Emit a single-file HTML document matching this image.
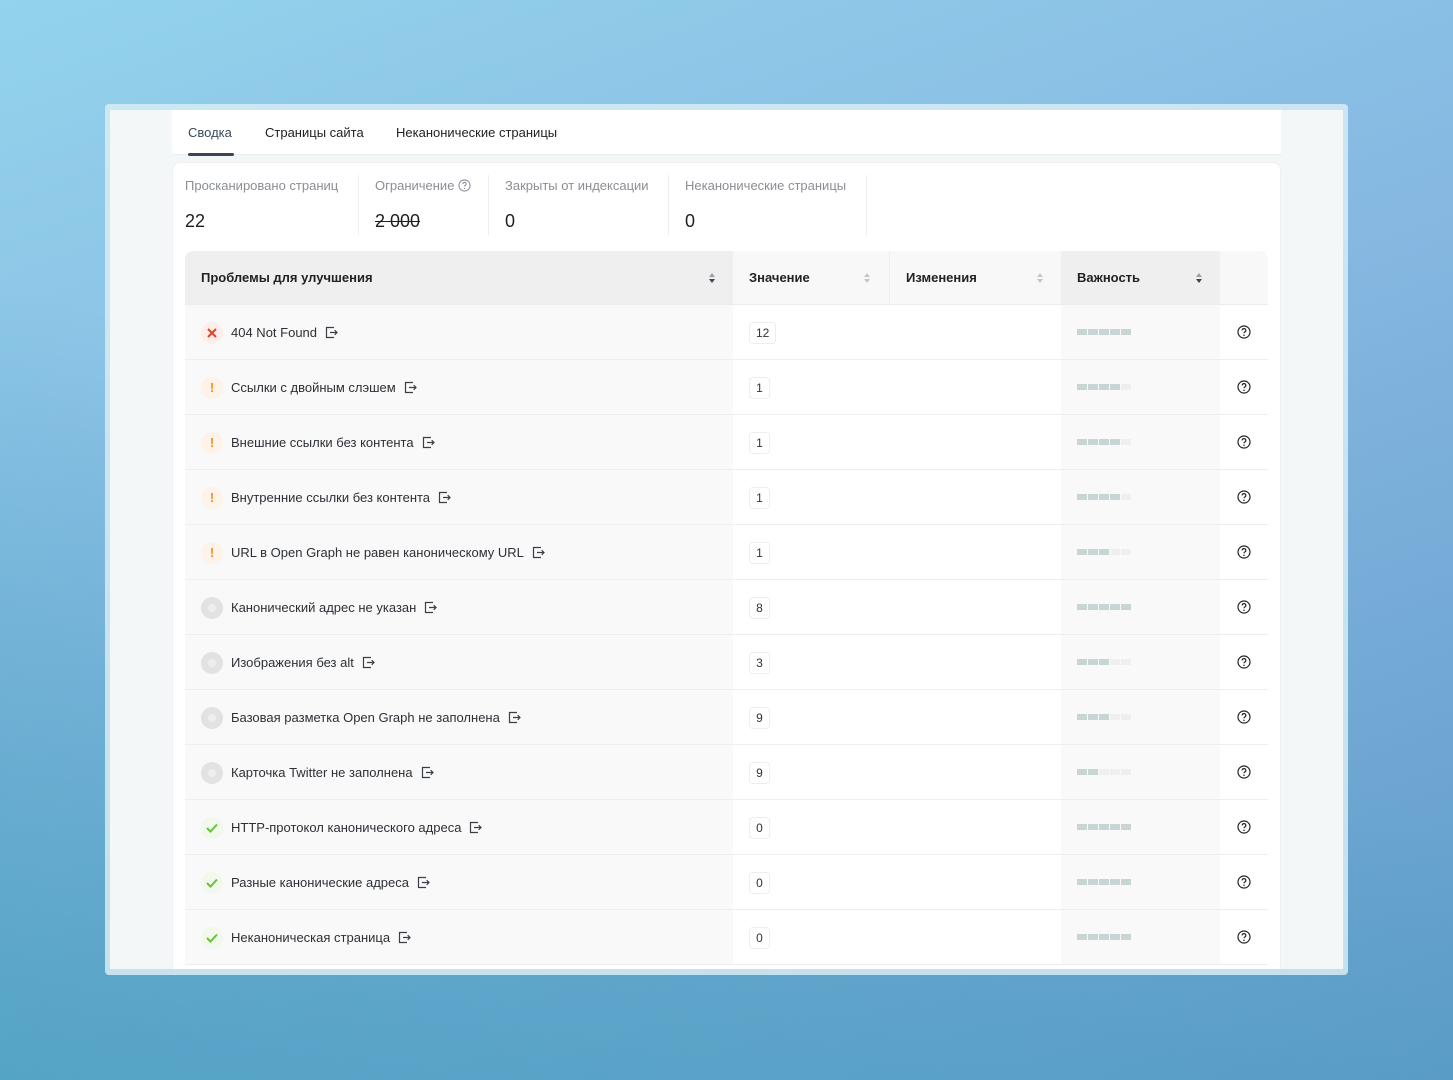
<!DOCTYPE html>
<html><head><meta charset="utf-8"><style>
*{box-sizing:border-box;margin:0;padding:0}
body{width:1453px;height:1080px;overflow:hidden;font-family:"Liberation Sans",sans-serif;background:linear-gradient(160deg,#93d3ec 0%,#86b8e2 45%,#5f9bc8 100%);position:relative}
.bgl{position:absolute;inset:0;background:linear-gradient(20deg,rgba(70,160,190,.7) 0%,rgba(70,160,190,0) 50%)}
.frame{position:absolute;left:105px;top:104px;width:1243px;height:871px;background:rgba(215,236,244,.85);border-radius:4px}
.inner{position:absolute;left:110px;top:110px;width:1233px;height:859px;background:#f4f7f8;overflow:hidden}
.tabs{position:absolute;left:62px;top:0;width:1109px;height:45px;background:#fff;border-bottom:1px solid #eceff0}
.tab{position:absolute;top:15px;font-size:13px;color:#222}
.tab.a{color:#3c4a5a}
.ul{position:absolute;left:78px;top:43px;width:46px;height:3px;background:#3a4656;border-radius:2px}
.card{position:absolute;left:62px;top:52px;width:1109px;height:900px;background:#fff;border-radius:8px;border:1px solid #eef0f1}
.sl{position:absolute;top:15px;font-size:13px;color:#8a8f95;white-space:nowrap}
.sv{position:absolute;top:48px;font-size:18px;color:#1c1f24;white-space:nowrap}
.dv{position:absolute;top:12px;width:1px;height:60px;background:#eceeef}
.tbl{position:absolute;left:12px;top:88px;width:1083px}
.row{position:relative;height:55px;border-bottom:1px solid #eceeef}
.c{position:absolute;top:0;height:100%}
.c1{left:0;width:548px;background:#f9f9f9}
.c2{left:548px;width:156px;background:#fff}
.c3{left:704px;width:172px;background:#fff}
.c4{left:876px;width:159px;background:#f9f9f9}
.c5{left:1035px;width:48px;background:#fff}
.hdr{height:54px;border-bottom:1px solid #ebeded}
.hdr .c1{background:#efefef;border-top-left-radius:8px}
.hdr .c2,.hdr .c3{background:#f8f8f8}
.hdr .c4{background:#efefef}
.hdr .c5{background:#f8f8f8;border-top-right-radius:8px}
.ht{position:absolute;left:16px;top:19px;font-size:13px;font-weight:bold;color:#222}
.sort{position:absolute;top:21px;width:8px;height:12px}
.ic{position:absolute;left:16px;top:17px;width:22px;height:22px;border-radius:50%;text-align:center;line-height:22px;font-size:13px;font-weight:bold}
.txt{position:absolute;left:46px;top:20px;font-size:13px;color:#2c3036;white-space:nowrap}
.ext{display:inline-block;vertical-align:-2px;margin-left:8px}
.val{position:absolute;left:16px;top:17px;height:22px;min-width:21px;padding:0 6px;border:1px solid #eceeef;border-radius:4px;font-size:12px;line-height:20px;color:#333;text-align:center}
.bars{position:absolute;left:16px;top:24px;display:flex;gap:1px}
.bars i{display:block;width:10px;height:6px;background:#eef0f0}
.bars i.f{background:#c7d5d5}
.q{position:absolute;left:17px;top:20px}
</style></head><body>
<div class="bgl"></div>
<div class="frame"></div>
<div class="inner">
<div class="tabs">
<div class="tab a" style="left:16px">Сводка</div>
<div class="tab" style="left:93px">Страницы сайта</div>
<div class="tab" style="left:224px">Неканонические страницы</div>
</div>
<div class="ul"></div>
<div class="card">
<div class="sl" style="left:12px">Просканировано страниц</div><div class="sv" style="left:12px">22</div>
<div class="dv" style="left:185px"></div>
<div class="sl" style="left:202px">Ограничение <svg width="13" height="13" viewBox="0 0 14 14" style="vertical-align:-2px"><circle cx="7" cy="7" r="6" fill="none" stroke="#8a8f95" stroke-width="1.1"/><path d="M5.2 5.4a1.8 1.8 0 1 1 2.6 1.6c-.6.3-.8.6-.8 1.2" fill="none" stroke="#8a8f95" stroke-width="1.1"/><circle cx="7" cy="10.2" r=".7" fill="#8a8f95"/></svg></div><div class="sv" style="left:202px;text-decoration:line-through">2 000</div>
<div class="dv" style="left:315px"></div>
<div class="sl" style="left:332px">Закрыты от индексации</div><div class="sv" style="left:332px">0</div>
<div class="dv" style="left:495px"></div>
<div class="sl" style="left:512px">Неканонические страницы</div><div class="sv" style="left:512px">0</div>
<div class="dv" style="left:693px"></div>
<div class="tbl">
<div class="row hdr">
<div class="c c1"><div class="ht">Проблемы для улучшения</div><svg class="sort" style="left:523px" viewBox="0 0 8 12"><path d="M1 5L4 1L7 5Z" fill="#9aa0a6"/><path d="M1 7L4 11L7 7Z" fill="#3a4656"/></svg></div>
<div class="c c2"><div class="ht">Значение</div><svg class="sort" style="left:130px" viewBox="0 0 8 12"><path d="M1 5L4 1L7 5Z" fill="#c3c7cb"/><path d="M1 7L4 11L7 7Z" fill="#c3c7cb"/></svg></div>
<div class="c c3" style="border-left:1px solid #eee"><div class="ht">Изменения</div><svg class="sort" style="left:146px" viewBox="0 0 8 12"><path d="M1 5L4 1L7 5Z" fill="#c3c7cb"/><path d="M1 7L4 11L7 7Z" fill="#c3c7cb"/></svg></div>
<div class="c c4"><div class="ht">Важность</div><svg class="sort" style="left:134px" viewBox="0 0 8 12"><path d="M1 5L4 1L7 5Z" fill="#9aa0a6"/><path d="M1 7L4 11L7 7Z" fill="#3a4656"/></svg></div>
<div class="c c5"></div>
</div>
<div id="rows"></div>
</div>
</div>
</div>
<script>
var data=[["x","404 Not Found","12",5],["w","Ссылки с двойным слэшем","1",4],["w","Внешние ссылки без контента","1",4],["w","Внутренние ссылки без контента","1",4],["w","URL в Open Graph не равен каноническому URL","1",3],["g","Канонический адрес не указан","8",5],["g","Изображения без alt","3",3],["g","Базовая разметка Open Graph не заполнена","9",3],["g","Карточка Twitter не заполнена","9",2],["ok","HTTP-протокол канонического адреса","0",5],["ok","Разные канонические адреса","0",5],["ok","Неканоническая страница","0",5]];
var ext='<svg class="ext" width="13" height="13" viewBox="0 0 13 13"><path d="M9 1.5H1.5v10H9" fill="none" stroke="#3a3f46" stroke-width="1.2"/><path d="M5 6.5h7M9.7 4.2l2.3 2.3-2.3 2.3" fill="none" stroke="#3a3f46" stroke-width="1.2"/></svg>';
var q='<svg class="q" width="14" height="14" viewBox="0 0 14 14"><circle cx="7" cy="7" r="6" fill="none" stroke="#222" stroke-width="1.2"/><path d="M5.2 5.4a1.8 1.8 0 1 1 2.6 1.6c-.6.3-.8.6-.8 1.2" fill="none" stroke="#222" stroke-width="1.2"/><circle cx="7" cy="10.2" r=".75" fill="#222"/></svg>';
var h='';
data.forEach(function(d){
var ic;
if(d[0]=="x")ic='<div class="ic" style="background:#fdeeea"><svg width="10" height="10" viewBox="0 0 10 10" style="margin-top:6px"><path d="M1 1L9 9M9 1L1 9" stroke="#e0452a" stroke-width="2"/></svg></div>';
else if(d[0]=="w")ic='<div class="ic" style="background:#fdf3e8;color:#f0922a">!</div>';
else if(d[0]=="g")ic='<div class="ic" style="background:#e2e2e2"><div style="width:8px;height:8px;border-radius:50%;background:#eee;margin:7px auto"></div></div>';
else ic='<div class="ic" style="background:#f1f8ec"><svg width="12" height="10" viewBox="0 0 12 10" style="margin-top:6px"><path d="M1 5l3.5 3.5L11 1.5" fill="none" stroke="#6cc03a" stroke-width="2"/></svg></div>';
var b='';for(var i=0;i<5;i++)b+='<i'+(i<d[3]?' class="f"':'')+'></i>';
h+='<div class="row"><div class="c c1">'+ic+'<div class="txt">'+d[1]+ext+'</div></div><div class="c c2"><div class="val">'+d[2]+'</div></div><div class="c c3"></div><div class="c c4"><div class="bars">'+b+'</div></div><div class="c c5">'+q+'</div></div>';
});
document.getElementById('rows').innerHTML=h;
</script>
</body></html>
